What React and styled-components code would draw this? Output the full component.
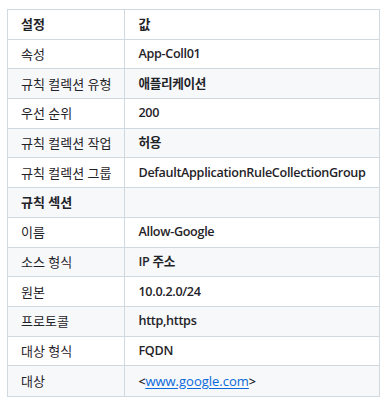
import React from "react";
import styled, { createGlobalStyle } from "styled-components";

const GlobalStyle = createGlobalStyle`
    body {
        margin: 0;
        background: #ffffff;
        font-family: "Open Sans", "Noto Sans CJK KR", sans-serif;
        color: #1f2328;
    }
`

const Page = styled.div`
    padding: 9px 7px;
`

const Table = styled.table`
    border-collapse: collapse;
    border-spacing: 0;
    width: 370px;
    font-size: 13px;
`

const Row = styled.tr`
    background-color: ${props => (props.$striped ? "#f6f8fa" : "#ffffff")};
`

const HeadCell = styled.th`
    border: 1px solid #d1d9e0;
    padding: 4.35px 13px;
    line-height: 20px;
    font-weight: 700;
    text-align: left;
    white-space: nowrap;
`

const Cell = styled.td`
    border: 1px solid #d1d9e0;
    padding: 4.35px 13px;
    line-height: 20px;
    white-space: nowrap;
    width: ${props => (props.$key ? "92px" : "auto")};
    font-weight: ${props => (props.$bold ? 600 : 400)};
`

const Value = styled(Cell)`
    font-size: 12.6px;
    font-weight: 600;
    letter-spacing: -0.32px;
`

const Link = styled.a`
    color: #0969da;
    text-decoration: underline;
    text-underline-offset: 2px;
    font-weight: 400;
    font-size: 13px;
    letter-spacing: 0;
`

const rows = [
    ["속성", "App-Coll01"],
    ["규칙 컬렉션 유형", "애플리케이션"],
    ["우선 순위", "200"],
    ["규칙 컬렉션 작업", "허용"],
    ["규칙 컬렉션 그룹", "DefaultApplicationRuleCollectionGroup"],
    ["규칙 섹션", "", true],
    ["이름", "Allow-Google"],
    ["소스 형식", "IP 주소"],
    ["원본", "10.0.2.0/24"],
    ["프로토콜", "http,https"],
    ["대상 형식", "FQDN"],
];

export default function App() {
    return (
        <Page>
            <GlobalStyle />
            <Table>
                <thead>
                    <Row>
                        <HeadCell>설정</HeadCell>
                        <HeadCell>값</HeadCell>
                    </Row>
                </thead>
                <tbody>
                    {rows.map(([name, value, section], i) => (
                        <Row key={name} $striped={i % 2 === 1}>
                            <Cell $key $bold={section}>{name}</Cell>
                            <Value>{value}</Value>
                        </Row>
                    ))}
                    <Row $striped>
                        <Cell $key>대상</Cell>
                        <Value>
                            &lt;<Link href="#">www.google.com</Link>&gt;
                        </Value>
                    </Row>
                </tbody>
            </Table>
        </Page>
    );
}
